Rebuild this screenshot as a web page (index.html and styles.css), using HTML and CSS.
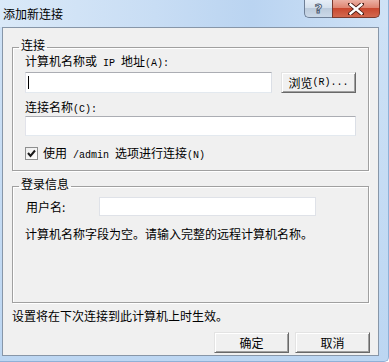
FILE: index.html
```html
<!DOCTYPE html>
<html lang="zh-CN">
<head>
<meta charset="utf-8">
<title>添加新连接</title>
<link rel="stylesheet" href="styles.css">
</head>
<body>
<div class="window">
  <div class="titlebar">
    <span class="title">添加新连接</span>
    <div class="caption">
      <div class="cbtn help"><span>?</span></div>
      <div class="cbtn close">
        <svg width="16" height="12" viewBox="0 0 16 12"><path d="M2 1 L14 11 M14 1 L2 11" stroke="#4a1c14" stroke-width="4.2" stroke-linecap="square"/><path d="M2.5 1.5 L13.5 10.5 M13.5 1.5 L2.5 10.5" stroke="#fff" stroke-width="2.4" stroke-linecap="square"/></svg>
      </div>
    </div>
  </div>
  <div class="client">
    <fieldset class="group g1">
      <legend>连接</legend>
      <div class="label l1">计算机名称或<span class="m"> IP </span>地址<span class="m">(A):</span></div>
      <div class="row r1">
        <div class="edit e1"><span class="caret"></span></div>
        <div class="button browse">浏览<span class="m">(R)...</span></div>
      </div>
      <div class="label l2">连接名称<span class="m">(C):</span></div>
      <div class="edit e2"></div>
      <div class="check-row">
        <span class="checkbox"><svg width="11" height="11" viewBox="0 0 11 11"><path d="M2 5 L4.5 8 L9 2.5" fill="none" stroke="#1a1a1a" stroke-width="2"/></svg></span>
        <span class="check-text">使用<span class="m"> /admin </span>选项进行连接<span class="m">(N)</span></span>
      </div>
    </fieldset>
    <fieldset class="group g2">
      <legend>登录信息</legend>
      <div class="row r3">
        <span class="ulabel">用户名:</span>
        <div class="edit e3"></div>
      </div>
      <div class="msg">计算机名称字段为空。请输入完整的远程计算机名称。</div>
    </fieldset>
    <div class="note">设置将在下次连接到此计算机上时生效。</div>
    <div class="actions">
      <div class="button">确定</div>
      <div class="button">取消</div>
    </div>
  </div>
</div>
</body>
</html>
```
FILE: styles.css
```css
* { box-sizing: border-box; }
html, body { margin: 0; padding: 0; }
body {
  width: 389px;
  height: 362px;
  overflow: hidden;
  font-family: "Noto Sans CJK SC", "Noto Sans", sans-serif;
  font-size: 12px;
  color: #000;
}
.window {
  width: 389px;
  height: 362px;
  display: flex;
  flex-direction: column;
  background: linear-gradient(to bottom, #cfe2f6, #bcd6f2);
  border-right: 1px solid #8fb0d6;
  border-bottom: 1px solid #8fb0d6;
  border-bottom-right-radius: 5px;
}
.titlebar {
  height: 27px;
  flex: none;
  display: flex;
  justify-content: space-between;
  align-items: flex-start;
  background: linear-gradient(to right, #dae9f8 0%, #c8ddf4 40%, #bad4f1 65%, #cfe2f6 100%);
}
.title {
  margin: 6px 0 0 3px;
  line-height: 16px;
  font-size: 12px;
  color: #000;
}
.caption {
  display: flex;
  margin-right: 8px;
}
.cbtn {
  height: 18px;
  display: flex;
  align-items: center;
  justify-content: center;
  border: 1px solid #6e7f96;
  border-top: none;
}
.help {
  width: 28px;
  border-right: none;
  border-bottom-left-radius: 5px;
  background: linear-gradient(to bottom, #e6eef7 0%, #d5e0ec 45%, #bccbdc 50%, #cbd9e8 100%);
}
.help span {
  font-family: "DejaVu Sans", sans-serif;
  font-size: 13px;
  line-height: 14px;
  color: #f4f7fb;
  -webkit-text-stroke: 1px #4e5d73;
  font-weight: bold;
}
.close {
  width: 48px;
  border-color: #7a3a2e;
  border-bottom-right-radius: 5px;
  background: linear-gradient(to bottom, #ebb1a4 0%, #df8571 45%, #c9482f 50%, #d3694f 100%);
}
.close svg { display: block; }
.client {
  flex: none;
  height: 329px;
  margin: 0 9px 0 2px;
  border: 1px solid #8796a8;
  background: #f0f0f0;
  display: flex;
  flex-direction: column;
}
.group {
  margin: 0 9px;
  min-width: 0;
  border: 1px solid #a0a0a0;
  box-shadow: inset 1px 1px 0 #fff, 1px 1px 0 #fff;
  padding: 0 12px 10px 12px;
}
.g1 { margin-top: 11px; }
.g2 { margin-top: 7px; padding-bottom: 62px; }
.group legend {
  line-height: 12px;
  padding: 0 2px 5px 2px;
  margin-left: -6px;
  background: transparent;
}
.m {
  font-family: "Liberation Mono", monospace;
  font-size: 10px;
}
.label { line-height: 12px; height: 12px; white-space: nowrap; }
.l1 { margin-top: -1px; }
.l2 { margin-top: 8px; }
.row { display: flex; }
.r1 { margin-top: 5px; gap: 9px; }
.edit {
  background: #fff;
  border: 1px solid;
  border-color: #abadb3 #dbdfe6 #e3e9ef #e2e3ea;
  position: relative;
}
.e1 { width: 248px; height: 21px; }
.caret {
  position: absolute;
  left: 2px;
  top: 3px;
  width: 1px;
  height: 13px;
  background: #000;
}
.e2 { width: 331px; height: 20px; margin-top: 3px; }
.button {
  width: 75px;
  height: 21px;
  display: flex;
  align-items: center;
  justify-content: center;
  background: #f0f0f0;
  border: 1px solid;
  border-color: #e3e3e3 #696969 #696969 #e3e3e3;
  box-shadow: inset 1px 1px 0 #fff, inset -1px -1px 0 #a0a0a0;
  line-height: 12px;
  white-space: nowrap;
}
.browse { padding-top: 1px; }
.check-row {
  margin-top: 11px;
  display: flex;
  align-items: center;
  height: 13px;
}
.checkbox {
  width: 13px;
  height: 13px;
  border: 1px solid #8e8f8f;
  background: linear-gradient(135deg, #ececec, #fff);
  display: flex;
  align-items: center;
  justify-content: center;
}
.checkbox svg { display: block; }
.check-text { margin-left: 5px; line-height: 13px; white-space: nowrap; }
.r3 { margin-top: 2px; align-items: center; }
.ulabel { width: 74px; padding-left: 1px; line-height: 12px; }
.e3 {
  width: 217px;
  height: 19px;
  border-color: #dfe2e8;
}
.msg { margin-top: 12px; line-height: 12px; height: 12px; white-space: nowrap; }
.note {
  margin: 7px 0 0 9px;
  line-height: 12px;
  height: 12px;
}
.actions {
  margin: 10px 8px 0 0;
  display: flex;
  justify-content: flex-end;
  gap: 6px;
}
```
